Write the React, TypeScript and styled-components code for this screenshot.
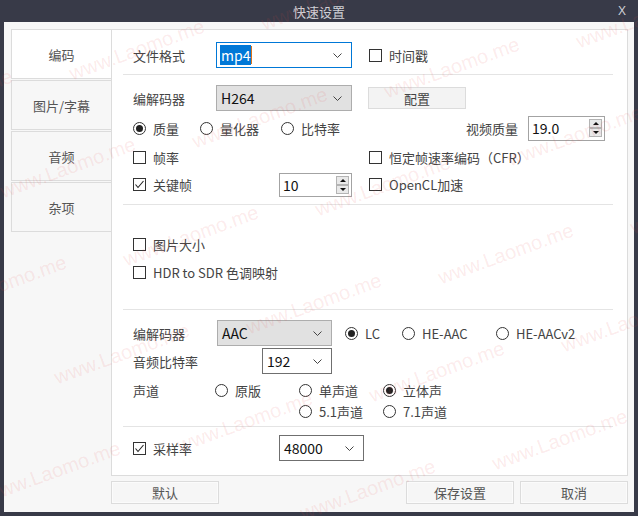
import React from 'react';
import styled, { createGlobalStyle } from 'styled-components';

const GlobalStyle = createGlobalStyle`
  html, body {
    margin: 0;
    padding: 0;
    background: #383a48;
  }
  body {
    font-family: "Noto Sans CJK SC", "Microsoft YaHei", sans-serif;
    font-size: 13px;
    color: #444;
  }
`;

const Window = styled.div`
  position: relative;
  width: 638px;
  height: 516px;
  background: #383a48;
  display: flex;
  flex-direction: column;
  overflow: hidden;
`;

const TitleBar = styled.div`
  flex: none;
  height: 22px;
  display: grid;
  grid-template-columns: 1fr auto 1fr;
  align-items: center;
  color: #cfd0d6;
  font-size: 13px;
`;

const CloseMark = styled.span`
  justify-self: end;
  padding-right: 12px;
  font-family: "Liberation Sans", sans-serif;
  font-size: 12px;
`;

const Client = styled.div`
  flex: 1;
  margin: 0 4px 4px;
  background: #f7f7f7;
  padding: 7px 6px 0 7px;
  display: flex;
  flex-direction: column;
`;

const Body = styled.div`
  display: flex;
  height: 447px;
`;

const TabList = styled.div`
  flex: none;
  width: 100px;
  display: flex;
  flex-direction: column;
  gap: 1px;
`;

const Tab = styled.div<{ $active?: boolean }>`
  box-sizing: border-box;
  height: 50px;
  border: 1px solid #dcdcdc;
  border-right: none;
  background: ${p => (p.$active ? '#ffffff' : '#f7f7f7')};
  color: #555;
  display: flex;
  align-items: center;
  justify-content: center;
`;

const Panel = styled.div`
  flex: 1;
  box-sizing: border-box;
  background: #fff;
  border: 1px solid #dcdcdc;
  display: flex;
  flex-direction: column;
`;

const Row = styled.div<{ $h: number; $mt?: number }>`
  display: flex;
  align-items: center;
  height: ${p => p.$h}px;
  margin-top: ${p => p.$mt ?? 0}px;
  padding-left: 21px;
`;

const Slot = styled.div<{ $w: number; $end?: boolean }>`
  flex: none;
  width: ${p => p.$w}px;
  display: flex;
  align-items: center;
  justify-content: ${p => (p.$end ? 'flex-end' : 'flex-start')};
  padding-right: ${p => (p.$end ? 10 : 0)}px;
  box-sizing: border-box;
`;

const Divider = styled.div<{ $mt: number }>`
  height: 1px;
  width: 490px;
  margin-left: 11px;
  margin-top: ${p => p.$mt}px;
  background: #e4e4e4;
`;

const Label = styled.span`
  color: #444;
  white-space: nowrap;
`;

const ComboBox = styled.div<{ $w: number; $variant?: 'focus' | 'gray' | 'plain' }>`
  box-sizing: border-box;
  width: ${p => p.$w}px;
  height: 26px;
  display: flex;
  align-items: center;
  padding: 0 9px 0 2px;
  font-size: 14px;
  color: #000;
  background: ${p => (p.$variant === 'gray' ? '#e1e1e1' : '#fff')};
  border: 1px solid
    ${p => (p.$variant === 'focus' ? '#0078d7' : p.$variant === 'gray' ? '#adadad' : '#6f6f6f')};
`;

const ComboText = styled.span<{ $selected?: boolean }>`
  flex: 1;
  display: flex;
  align-items: center;
  padding-left: 1px;
  span {
    background: ${p => (p.$selected ? '#0078d7' : 'transparent')};
    color: ${p => (p.$selected ? '#fff' : '#111')};
    line-height: 20px;
    padding: 0 1px;
  }
`;

const Caret = styled.i`
  width: 1px;
  height: 18px;
  background: #d9731c;
`;

const Button = styled.div<{ $w: number; $h: number }>`
  box-sizing: border-box;
  width: ${p => p.$w}px;
  height: ${p => p.$h}px;
  background: #f3f3f3;
  border: 1px solid #dcdcdc;
  color: #444;
  display: flex;
  align-items: center;
  justify-content: center;
`;

const SpinBox = styled.div<{ $w: number; $h: number }>`
  box-sizing: border-box;
  width: ${p => p.$w}px;
  height: ${p => p.$h}px;
  border: 1px solid #a3a3a3;
  background: #fff;
  display: flex;
  align-items: center;
  padding-left: 3px;
  font-size: 14px;
  color: #111;
`;

const SpinButtons = styled.div`
  margin-left: auto;
  margin-right: 2px;
  display: flex;
  flex-direction: column;
`;

const SpinArrow = styled.div<{ $down?: boolean }>`
  box-sizing: border-box;
  width: 13px;
  height: 9px;
  background: #e9e9e9;
  border: 1px solid #b4b4b4;
  display: flex;
  align-items: center;
  justify-content: center;
  &::after {
    content: '';
    border-left: 3px solid transparent;
    border-right: 3px solid transparent;
    ${p => (p.$down ? 'border-top: 3px solid #111;' : 'border-bottom: 3px solid #111;')}
  }
`;

const Choice = styled.label`
  display: inline-flex;
  align-items: center;
  gap: 7px;
  color: #444;
  white-space: nowrap;
`;

const Box = styled.span`
  box-sizing: border-box;
  width: 13px;
  height: 13px;
  border: 1px solid #333;
  background: #fff;
  display: flex;
  align-items: center;
  justify-content: center;
`;

const Circle = styled.span<{ $on?: boolean }>`
  box-sizing: border-box;
  width: 13px;
  height: 13px;
  border-radius: 50%;
  border: 1px solid #333;
  background: #fff;
  display: flex;
  align-items: center;
  justify-content: center;
  &::after {
    content: '';
    width: 7px;
    height: 7px;
    border-radius: 50%;
    background: ${p => (p.$on ? '#222' : 'transparent')};
  }
`;

const Footer = styled.div`
  display: flex;
  gap: 6px;
  margin-top: 5px;
  padding-left: 100px;
`;

const FooterButton = styled.div`
  box-sizing: border-box;
  width: 108px;
  height: 23px;
  border: 1px solid #dcdcdc;
  background: #f6f6f6;
  box-shadow: inset 0 0 0 1px #fbfbfb;
  color: #555;
  display: flex;
  align-items: center;
  justify-content: center;
`;

const Spacer = styled.div`
  flex: 1;
`;

const Watermarks = styled.div`
  position: absolute;
  inset: 0;
  pointer-events: none;
  overflow: hidden;
`;

const Mark = styled.span`
  position: absolute;
  transform: translate(-50%, -50%) rotate(-20deg);
  font-family: "Liberation Sans", Arial, sans-serif;
  font-size: 20px;
  color: rgba(232, 70, 70, 0.11);
  white-space: nowrap;
`;

const Chevron = () => (
  <svg width="9" height="5" viewBox="0 0 9 5">
    <polyline points="0.5,0.5 4.5,4.5 8.5,0.5" fill="none" stroke="#444" strokeWidth="1" />
  </svg>
);

const Check = ({ on, children }: { on?: boolean; children: React.ReactNode }) => (
  <Choice>
    <Box>
      {on && (
        <svg width="11" height="11" viewBox="0 0 11 11">
          <polyline points="1.5,5.5 4,8.5 9.5,2" fill="none" stroke="#222" strokeWidth="1.1" />
        </svg>
      )}
    </Box>
    {children}
  </Choice>
);

const Radio = ({ on, children }: { on?: boolean; children: React.ReactNode }) => (
  <Choice>
    <Circle $on={on} />
    {children}
  </Choice>
);

const Combo = ({ w, value, variant, selected }: { w: number; value: string; variant?: 'focus' | 'gray' | 'plain'; selected?: boolean }) => (
  <ComboBox $w={w} $variant={variant}>
    <ComboText $selected={selected}>
      <span>{value}</span>
      {selected && <Caret />}
    </ComboText>
    <Chevron />
  </ComboBox>
);

const Spin = ({ w, h, value }: { w: number; h: number; value: string }) => (
  <SpinBox $w={w} $h={h}>
    {value}
    <SpinButtons>
      <SpinArrow />
      <SpinArrow $down />
    </SpinButtons>
  </SpinBox>
);

// watermark centres follow the lattice read off the screenshot
function watermarkSpots() {
  const spots: { x: number; y: number }[] = [];
  for (let m = -6; m <= 10; m++) {
    for (let n = -6; n <= 6; n++) {
      const x = 137 + 123 * m + 192 * n;
      const y = 50 + 68 * m - 50 * n;
      if (x > -60 && x < 700 && y > -20 && y < 540) spots.push({ x, y });
    }
  }
  return spots;
}

export default function App() {
  const tabs = ['编码', '图片/字幕', '音频', '杂项'];
  return (
    <>
      <GlobalStyle />
      <Window>
        <TitleBar>
          <span />
          <span>快速设置</span>
          <CloseMark>X</CloseMark>
        </TitleBar>
        <Client>
          <Body>
            <TabList>
              {tabs.map((t, i) => (
                <Tab key={t} $active={i === 0}>{t}</Tab>
              ))}
            </TabList>
            <Panel>
              <Row $h={26} $mt={12}>
                <Slot $w={83}><Label>文件格式</Label></Slot>
                <Slot $w={153}><Combo w={136} value="mp4" variant="focus" selected /></Slot>
                <Check>时间戳</Check>
              </Row>
              <Divider $mt={6} />

              <Row $h={26} $mt={10}>
                <Slot $w={83}><Label>编解码器</Label></Slot>
                <Slot $w={152}><Combo w={136} value="H264" variant="gray" /></Slot>
                <Button $w={98} $h={22}>配置</Button>
              </Row>
              <Row $h={26} $mt={4}>
                <Slot $w={67}><Radio on>质量</Radio></Slot>
                <Slot $w={81}><Radio>量化器</Radio></Slot>
                <Slot $w={150}><Radio>比特率</Radio></Slot>
                <Slot $w={97} $end><Label>视频质量</Label></Slot>
                <Spin w={77} h={25} value="19.0" />
              </Row>
              <Row $h={28} $mt={2}>
                <Slot $w={236}><Check>帧率</Check></Slot>
                <Check>恒定帧速率编码（CFR）</Check>
              </Row>
              <Row $h={25} $mt={1}>
                <Slot $w={146}><Check on>关键帧</Check></Slot>
                <Slot $w={90}><Spin w={73} h={24} value="10" /></Slot>
                <Check>OpenCL加速</Check>
              </Row>
              <Divider $mt={7} />

              <Row $h={28} $mt={25}>
                <Check>图片大小</Check>
              </Row>
              <Row $h={28}>
                <Check>HDR to SDR 色调映射</Check>
              </Row>
              <Divider $mt={23} />

              <Row $h={26} $mt={10}>
                <Slot $w={84}><Label>编解码器</Label></Slot>
                <Slot $w={128}><Combo w={115} value="AAC" variant="gray" /></Slot>
                <Slot $w={57}><Radio on>LC</Radio></Slot>
                <Slot $w={94}><Radio>HE-AAC</Radio></Slot>
                <Radio>HE-AACv2</Radio>
              </Row>
              <Row $h={26} $mt={2}>
                <Slot $w={129}><Label>音频比特率</Label></Slot>
                <Combo w={70} value="192" variant="plain" />
              </Row>
              <Row $h={22} $mt={5}>
                <Slot $w={82}><Label>声道</Label></Slot>
                <Slot $w={84}><Radio>原版</Radio></Slot>
                <Slot $w={84}><Radio>单声道</Radio></Slot>
                <Radio on>立体声</Radio>
              </Row>
              <Row $h={20}>
                <Slot $w={166} />
                <Slot $w={84}><Radio>5.1声道</Radio></Slot>
                <Radio>7.1声道</Radio>
              </Row>
              <Divider $mt={5} />

              <Row $h={26} $mt={8}>
                <Slot $w={146}><Check on>采样率</Check></Slot>
                <Combo w={85} value="48000" variant="plain" />
              </Row>
            </Panel>
          </Body>
          <Footer>
            <FooterButton>默认</FooterButton>
            <Spacer />
            <FooterButton>保存设置</FooterButton>
            <FooterButton>取消</FooterButton>
          </Footer>
        </Client>
        <Watermarks>
          {watermarkSpots().map((s, i) => (
            <Mark key={i} style={{ left: s.x, top: s.y }}>www.Laomo.me</Mark>
          ))}
        </Watermarks>
      </Window>
    </>
  );
}
